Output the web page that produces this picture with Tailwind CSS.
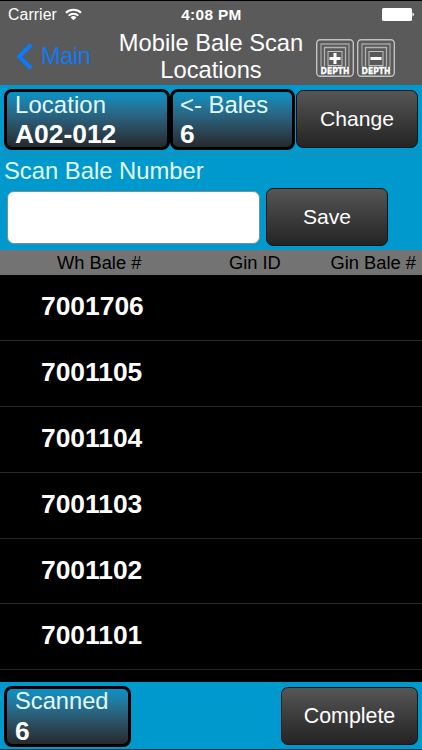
<!DOCTYPE html>
<html lang="en">
<head>
  <meta charset="UTF-8" />
  <meta name="viewport" content="width=device-width, initial-scale=1.0"/>
  <title>Mobile Bale Scan Locations</title>
  <script src="https://cdn.jsdelivr.net/npm/@tailwindcss/browser@4"></script>
</head>
<body class="bg-black font-['Liberation_Sans',Arial,sans-serif] overflow-hidden">
  <div class="w-[422px] h-[750px] flex flex-col overflow-hidden">

    <!-- Status bar + nav -->
    <header class="h-[85px] shrink-0 bg-[#5a5a5a] border-t border-black text-white">
      <div class="h-7 grid grid-cols-3 items-center pl-2 pr-[7px] text-[15.8px] leading-7">
        <div class="flex items-center gap-[8px]">
          <span class="tracking-[0.1px]">Carrier</span>
          <svg class="-mt-px" width="17" height="13" viewBox="0 0 17 13" fill="none" stroke="white" stroke-width="2">
            <path d="M1 4.800a10.800 10.800 0 0 1 15 0M3.700 7.600a6.900 6.900 0 0 1 9.600 0"/>
            <path d="M8.500 12.300L5.600 9.500a4.100 4.100 0 0 1 5.800 0z" fill="white" stroke="none"/>
          </svg>
        </div>
        <span class="text-center font-bold text-[15.4px] tracking-[0.35px]">4:08 PM</span>
        <svg class="justify-self-end -mt-px" width="33" height="13" viewBox="0 0 33 13" fill="white">
          <rect x="0" y="0" width="30" height="13" rx="1.500"/>
          <path d="M30.500 4.500q3 2 0 4z"/>
        </svg>
      </div>
      <div class="flex h-14 pl-4">
        <a class="flex items-center gap-[8px] w-[100px] h-[55px] text-[#1279ee] text-[23.7px]">
          <svg width="17" height="27" viewBox="0 0 17 27" fill="none" stroke="#0a7bff" stroke-width="4">
            <path d="M15.200 1.500L3.300 13.500l11.900 12"/>
          </svg>
          <span class="pt-px tracking-[-0.5px]">Main</span>
        </a>
        <h1 class="w-[190px] pt-px text-center text-[23.7px] leading-[27px] whitespace-nowrap">Mobile Bale Scan<br>Locations</h1>
        <div class="flex gap-[3px] pt-[10px] pl-[10px]">
          <svg width="38" height="38" viewBox="0 0 38 38" fill="none" stroke="#c2c2c2">
            <rect x=".7" y=".7" width="36.600" height="36.600" rx="3.500" stroke-width="1.400"/>
            <path d="M5 27.500V5h28v22.500" stroke="#a2a2a2" stroke-width="1.300"/>
            <path d="M8.500 27.500V8.500h21v19" stroke="#b2b2b2" stroke-width="1.300"/>
            <rect x="12" y="12.500" width="14" height="14"/>
            <path d="M19 14v11M13.500 19.500h11" stroke="white" stroke-width="3"/>
            <text x="19" y="34.500" text-anchor="middle" textLength="29" lengthAdjust="spacingAndGlyphs" font-family="DejaVu Sans" font-size="8" font-weight="bold" fill="white" stroke="white" stroke-width=".3">DEPTH</text>
          </svg>
          <svg width="38" height="38" viewBox="0 0 38 38" fill="none" stroke="#c2c2c2">
            <rect x=".7" y=".7" width="36.600" height="36.600" rx="3.500" stroke-width="1.400"/>
            <path d="M5 27.500V5h28v22.500" stroke="#a2a2a2" stroke-width="1.300"/>
            <path d="M8.500 27.500V8.500h21v19" stroke="#b2b2b2" stroke-width="1.300"/>
            <rect x="12" y="12.500" width="14" height="14"/>
            <path d="M13.500 19.500h11" stroke="white" stroke-width="3"/>
            <text x="19" y="34.500" text-anchor="middle" textLength="29" lengthAdjust="spacingAndGlyphs" font-family="DejaVu Sans" font-size="8" font-weight="bold" fill="white" stroke="white" stroke-width=".3">DEPTH</text>
          </svg>
        </div>
      </div>
    </header>

    <!-- Location / bales -->
    <section class="h-[70px] shrink-0 flex bg-[#0099cd] border-b border-[#34839f] pt-1 pl-1">
      <div class="w-[166px] h-[61px] border-[3px] border-black rounded-lg bg-linear-to-b from-[#0293c6] to-[#252a2d] pl-2 text-white">
        <div class="text-[23.9px] leading-[25px] tracking-[0.1px] text-[#e2faff]">Location</div>
        <div class="text-[26.4px] leading-[35px] font-bold">A02-012</div>
      </div>
      <div class="w-[125px] h-[61px] border-[3px] border-black rounded-lg bg-linear-to-b from-[#0293c6] to-[#252a2d] pl-[7px] text-white">
        <div class="text-[23.9px] leading-[25px] text-[#e2faff] whitespace-nowrap">&lt;- Bales</div>
        <div class="text-[26.4px] leading-[35px] font-bold">6</div>
      </div>
      <button class="w-[122px] h-[58px] mt-px ml-px border border-[#0b1418] rounded-[7px] bg-linear-to-b from-[#565656] to-[#242424] text-white text-[21.1px]">Change</button>
    </section>

    <!-- Bale entry -->
    <section class="h-[95px] shrink-0 bg-[#0099cd]">
      <div class="h-8 pl-1 text-[23.8px] leading-[31px] text-[#e2faff]">Scan Bale Number</div>
      <div class="flex pl-[7px] gap-[6px]">
        <input type="text" class="w-[253px] h-[53px] mt-1 border border-[#7c8f96] rounded-[7px] bg-white" />
        <button class="w-[122px] h-[58px] mt-px border border-[#0b1418] rounded-[7px] bg-linear-to-b from-[#565656] to-[#242424] text-white text-[21.1px]">Save</button>
      </div>
    </section>

    <!-- Bale list -->
    <div class="h-[25px] shrink-0 flex bg-[#737373] text-black text-[18.3px] leading-[25px] whitespace-nowrap">
      <span class="w-[172px] pl-[57px]">Wh Bale #</span>
      <span class="w-[158.500px] pl-[57px]">Gin ID</span>
      <span>Gin Bale #</span>
    </div>
    <ul class="h-[407px] shrink-0 overflow-hidden bg-black text-white font-bold text-[26.4px] leading-[63px]">
      <li class="h-[65.900px] pl-[41px] border-b border-[#272727]">7001706</li>
      <li class="h-[65.900px] pl-[41px] border-b border-[#272727]">7001105</li>
      <li class="h-[65.900px] pl-[41px] border-b border-[#272727]">7001104</li>
      <li class="h-[65.900px] pl-[41px] border-b border-[#272727]">7001103</li>
      <li class="h-[65.900px] pl-[41px] border-b border-[#272727]">7001102</li>
      <li class="h-[65.900px] pl-[41px] border-b border-[#272727]">7001101</li>
    </ul>

    <!-- Footer -->
    <footer class="h-[68px] shrink-0 flex justify-between bg-[#0099cd] border-b border-[#05354a] pt-1 pl-1 pr-1">
      <div class="w-[127px] h-[61px] border-[3px] border-black rounded-lg bg-linear-to-b from-[#0293c6] to-[#252a2d] pl-2 text-white">
        <div class="text-[23.7px] leading-[25px] text-[#e2faff]">Scanned</div>
        <div class="text-[26.4px] leading-[35px] font-bold">6</div>
      </div>
      <button class="w-[137px] h-[58px] mt-px border border-[#0b1418] rounded-[7px] bg-linear-to-b from-[#565656] to-[#242424] text-white text-[21.4px]">Complete</button>
    </footer>
  </div>
</body>
</html>
